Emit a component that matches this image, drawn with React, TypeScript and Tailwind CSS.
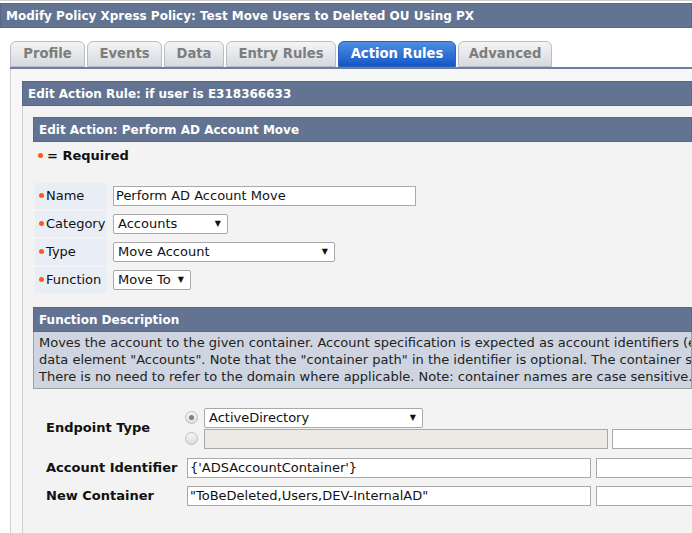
import React from 'react';

const tabs = [
    { label: 'Profile', w: 'w-[75px]' },
    { label: 'Events', w: 'w-[75px]' },
    { label: 'Data', w: 'w-[60px]' },
    { label: 'Entry Rules', w: 'w-[110px]' },
    { label: 'Action Rules', w: 'w-[118px]' },
    { label: 'Advanced', w: 'w-[94px]' },
];

function Bar({ title }: { title: string }) {
    return (
        <div className="h-[25px] bg-[#627491] text-white font-bold text-[12px] leading-[24px] pl-[5px] whitespace-nowrap border border-[#56678a]">
            {title}
        </div>
    );
}

function Select({ value, width }: { value: string; width: string }) {
    return (
        <div className={`${width} shrink-0 h-[20px] bg-white border border-[#a9a9a9] rounded-[2px] flex items-center justify-between pl-[4px] pr-[6px] text-[13px] text-[#111]`}>
            <span className="whitespace-nowrap">{value}</span>
            <span className="text-[8px] leading-none">▼</span>
        </div>
    );
}

function Input({ value = '', width, disabled = false }: { value?: string; width: string; disabled?: boolean }) {
    return (
        <div className={`${width} shrink-0 h-[20px] border border-[#a9a9a9] pl-[2px] text-[13px] leading-[18px] whitespace-nowrap overflow-hidden text-[#111] ${disabled ? 'bg-[#ebebe4]' : 'bg-white'}`}>
            {value}
        </div>
    );
}

function Radio({ checked }: { checked?: boolean }) {
    return (
        <span className="w-[13px] h-[13px] shrink-0 rounded-full border border-[#bdbdbd] bg-gradient-to-b from-[#f6f6f6] to-[#dedede] flex items-center justify-center">
            {checked && <span className="w-[5px] h-[5px] rounded-full bg-[#808080]" />}
        </span>
    );
}

function Dot() {
    return <span className="inline-block w-[5px] h-[5px] rounded-full bg-[#ff5a1a] mr-[2px]" />;
}

function Row({ label, children }: { label: string; children: React.ReactNode }) {
    return (
        <div className="flex items-center h-[26px]">
            <div className="w-[72px] h-full bg-[#e9edf6] flex items-center pl-[4px] text-[13px] text-[#111]">
                <Dot />
                {label}
            </div>
            <div className="pl-[6px]">{children}</div>
        </div>
    );
}

export default function App() {
    return (
        <div className="w-[692px] h-[533px] overflow-hidden bg-white font-['DejaVu_Sans',sans-serif]">
            <div className="pt-[2px] border-t border-[#cfcfcf]">
                <Bar title="Modify Policy Xpress Policy: Test Move Users to Deleted OU Using PX" />
            </div>

            <div className="flex gap-[2px] pl-[10px] mt-[13px] items-end">
                {tabs.map((t) => {
                    const active = t.label === 'Action Rules';
                    return (
                        <div
                            key={t.label}
                            className={`${t.w} h-[26px] rounded-t-[6px] border text-center text-[13.2px] font-bold leading-[24px] whitespace-nowrap ${
                                active
                                    ? 'bg-gradient-to-b from-[#4e8fe0] to-[#1257c9] border-[#2a63bd] text-white'
                                    : 'bg-gradient-to-b from-[#f3f4f6] to-[#d7dade] border-[#b9bdc4] text-[#7d7d7d]'
                            }`}
                        >
                            {t.label}
                        </div>
                    );
                })}
            </div>
            <div className="h-[2px] bg-[#6c7ea3] ml-[10px]" />

            <div className="ml-[10px] border-l border-[#d2d2d2] bg-[#f7f7f7] pl-[11px] pt-[12px] h-[470px]">
                <Bar title="Edit Action Rule: if user is E318366633" />
                <div className="border-l border-[#cfcfcf] bg-[#f3f3f3] pl-[10px] pt-[11px] h-[440px]">
                    <Bar title="Edit Action: Perform AD Account Move" />
                    <div className="pl-[5px] pt-[4px] text-[13px] font-bold text-[#111] flex items-center">
                        <Dot />
                        <span className="ml-[2px]">= Required</span>
                    </div>

                    <div className="pl-[2px] mt-[17px] flex flex-col gap-[2px]">
                        <Row label="Name">
                            <Input value="Perform AD Account Move" width="w-[303px]" />
                        </Row>
                        <Row label="Category">
                            <Select value="Accounts" width="w-[115px]" />
                        </Row>
                        <Row label="Type">
                            <Select value="Move Account" width="w-[222px]" />
                        </Row>
                        <Row label="Function">
                            <Select value="Move To" width="w-[78px]" />
                        </Row>
                    </div>

                    <div className="mt-[14px]">
                        <Bar title="Function Description" />
                        <div className="bg-[#ced5e0] border border-t-0 border-[#9aa0a8] pl-[5px] pt-[2px] pb-[3px] text-[13px] leading-[17px] text-[#222] whitespace-nowrap overflow-hidden">
                            <div>Moves the account to the given container. Account specification is expected as account identifiers (e.g.</div>
                            <div>data element "Accounts". Note that the "container path" in the identifier is optional. The container s</div>
                            <div>There is no need to refer to the domain where applicable. Note: container names are case sensitive.</div>
                        </div>
                    </div>

                    <div className="pl-[13px] mt-[19px] text-[13px] text-[#111]">
                        <div className="flex items-center">
                            <div className="w-[139px] shrink-0 font-bold">Endpoint Type</div>
                            <div className="flex flex-col gap-[1px]">
                                <div className="flex items-center gap-[6px]">
                                    <Radio checked />
                                    <Select value="ActiveDirectory" width="w-[219px]" />
                                </div>
                                <div className="flex items-center">
                                    <Radio />
                                    <div className="w-[6px] shrink-0" />
                                    <Input width="w-[404px]" disabled />
                                    <div className="w-[4px] shrink-0" />
                                    <Input width="w-[100px]" />
                                </div>
                            </div>
                        </div>
                        <div className="flex items-center mt-[9px]">
                            <div className="w-[141px] shrink-0 font-bold">Account Identifier</div>
                            <Input value="{'ADSAccountContainer'}" width="w-[404px]" />
                            <div className="w-[5px] shrink-0" />
                            <Input width="w-[120px]" />
                        </div>
                        <div className="flex items-center mt-[8px]">
                            <div className="w-[141px] shrink-0 font-bold">New Container</div>
                            <Input value={'"ToBeDeleted,Users,DEV-InternalAD"'} width="w-[404px]" />
                            <div className="w-[5px] shrink-0" />
                            <Input width="w-[120px]" />
                        </div>
                    </div>
                </div>
            </div>
        </div>
    );
}
